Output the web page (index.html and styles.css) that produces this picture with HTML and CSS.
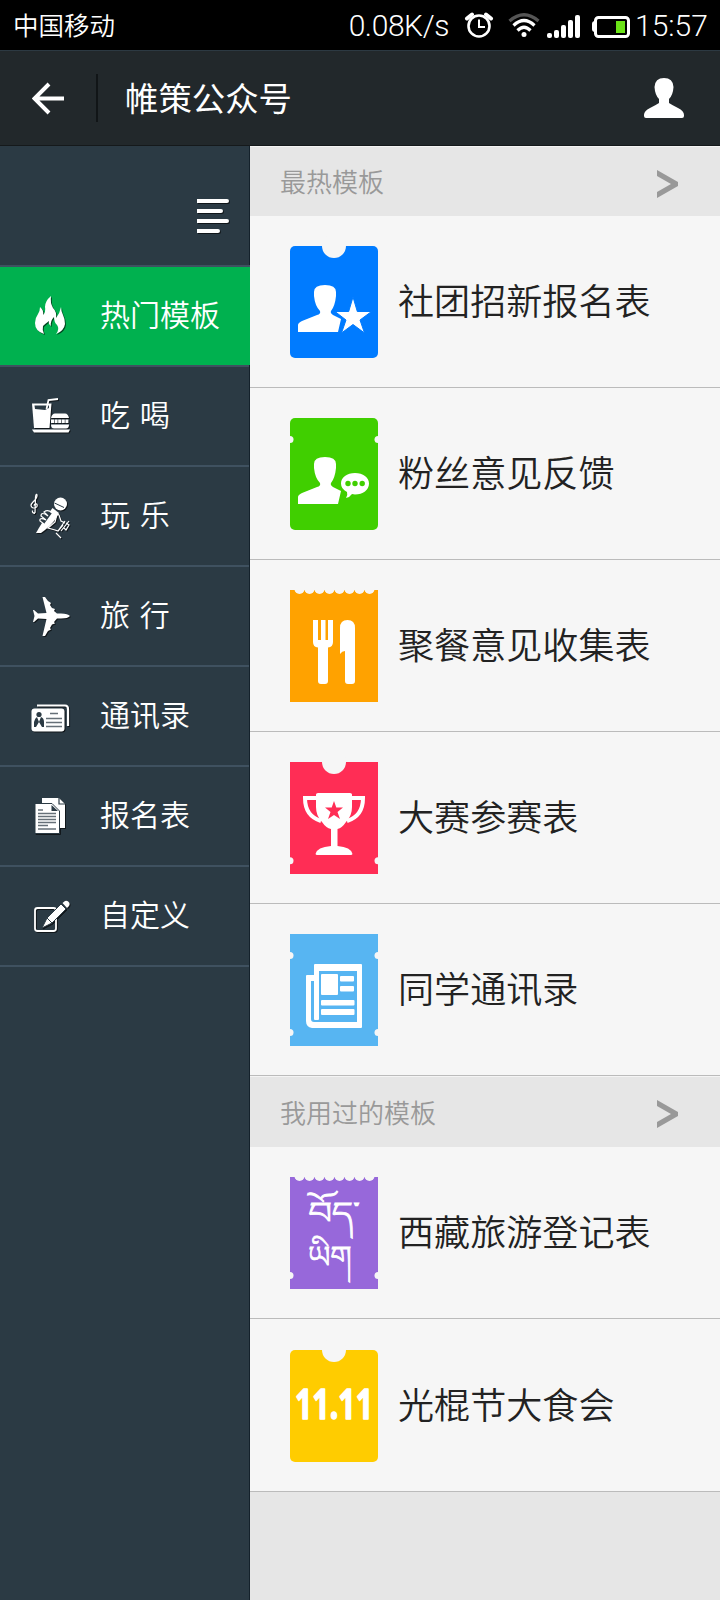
FILE: index.html
```html
<!DOCTYPE html>
<html lang="zh-CN">
<head>
  <meta charset="utf-8">
  <title>帷策公众号</title>
  <meta name="viewport" content="width=device-width, initial-scale=1.0">
  <link rel="stylesheet" href="styles.css">
</head>
<body>
  <!-- Shared shapes -->
  <svg class="defs" width="0" height="0">
    <symbol id="person" viewBox="0 0 88 112">
      <path fill="#fff" d="M8 86V79Q8 77 12 75L27 69Q31 68 30 65Q25 60 24 50V46Q24 39 35 39Q46 39 46 46V50Q45 60 41 65Q40 67 43 69L51 73L48 86Z"/>
    </symbol>
    <symbol id="scallop" viewBox="0 0 88 112">
      <g fill="#f6f6f6">
        <circle cx="9.500" cy="-1" r="5"/><circle cx="19.500" cy="-1" r="5"/><circle cx="29.500" cy="-1" r="5"/><circle cx="39.500" cy="-1" r="5"/>
        <circle cx="49.500" cy="-1" r="5"/><circle cx="59.500" cy="-1" r="5"/><circle cx="69.500" cy="-1" r="5"/><circle cx="79.500" cy="-1" r="5"/>
      </g>
    </symbol>
  </svg>

  <div class="status-bar">
    <span class="carrier">中国移动</span>
    <span class="speed">0.08K/s</span>
    <svg class="alarm" width="30" height="26" viewBox="0 0 30 26">
      <circle cx="15" cy="14" r="10.500" fill="none" stroke="#fff" stroke-width="2.600"/>
      <path d="M15 7.500V15H21" fill="none" stroke="#fff" stroke-width="2"/>
      <path d="M3 6.500L8 2.500M27 6.500L22 2.500" stroke="#fff" stroke-width="4" stroke-linecap="round"/>
    </svg>
    <svg class="wifi" width="32" height="26" viewBox="0 0 32 26">
      <g fill="none" stroke-width="3.200">
        <path d="M1.500 9Q16-3.500 30.500 9" stroke="#555"/>
        <path d="M5.500 13.500Q16 3.500 26.500 13.500" stroke="#fff"/>
        <path d="M9.500 18.500Q16 12 22.500 18.500" stroke="#fff"/>
      </g>
      <circle cx="16" cy="22.500" r="2.500" fill="#fff"/>
    </svg>
    <svg class="signal" width="34" height="24" viewBox="0 0 34 24">
      <g fill="#fff">
        <rect x="0" y="18" width="5" height="5" rx="2"/>
        <rect x="7" y="15" width="5" height="8" rx="2"/>
        <rect x="14" y="10" width="5" height="13" rx="2"/>
        <rect x="21" y="5" width="5" height="18" rx="2"/>
        <rect x="28" y="0" width="5" height="23" rx="2"/>
      </g>
    </svg>
    <svg class="battery" width="38" height="24" viewBox="0 0 38 24">
      <rect x="0" y="6" width="6" height="11" rx="3" fill="#fff"/>
      <rect x="3.500" y="2.500" width="33" height="19" rx="3" fill="#000" stroke="#fff" stroke-width="3"/>
      <rect x="24" y="6" width="9" height="12" fill="#6be317"/>
    </svg>
    <span class="clock">15:57</span>
  </div>

  <header class="header">
    <svg class="back" width="34" height="34" viewBox="0 0 34 34">
      <path d="M32 17.500H3M17 3L2.500 17.500L17 32" fill="none" stroke="#fff" stroke-width="4"/>
    </svg>
    <h1>帷策公众号</h1>
    <svg class="user" width="42" height="42" viewBox="0 0 42 42">
      <path fill="#fff" d="M21 1Q30 1 30.500 10Q30 18 26 22V26Q29 28 35 31Q41 34 41 38V39Q41 41 39 41H3Q1 41 1 39V38Q1 34 7 31Q13 28 16 26V22Q12 18 11.500 10Q12 1 21 1Z"/>
    </svg>
  </header>

  <div class="container">
    <nav class="sidebar">
      <div class="toggle">
        <svg width="34" height="38" viewBox="0 0 34 38">
          <path d="M0 3H30M0 13H24M0 23H30M0 33H21" stroke="#fff" stroke-width="4"/>
          <path d="M29.500 3H30M23.500 13H24M29.500 23H30M20.500 33H21" stroke="#fff" stroke-width="4" stroke-linecap="round"/>
        </svg>
      </div>
      <ul class="menu">
        <li class="active">
          <svg width="42" height="42" viewBox="0 0 42 42">
            <path fill="#fff" d="M14 39Q5 36 5 28Q5 23 8 19Q10 16 10 12Q14 15 13 20Q16 17 15 12Q15 6 21 1Q20 8 23 13Q27 17 26 23Q30 18 31 12Q31 16 33 20Q35 24 35 29Q34 36 26 39Q30 34 27 30Q24 27 24 22Q20 26 21 31Q18 29 19 26Q15 29 13 31Q12 35 14 39Z"/>
          </svg>
          <span>热门模板</span>
        </li>
        <li>
          <svg width="42" height="42" viewBox="0 0 42 42">
            <path fill="#fff" d="M2 8.500H21.500L19.500 33H4Z"/>
            <path fill="#2b3a44" d="M4.500 10.500H19V13L15 15L5 14Z"/>
            <path d="M16.500 14L18.500 5L28 4" fill="none" stroke="#fff" stroke-width="1.800"/>
            <path fill="#fff" d="M21 23Q22 18.500 25 18.500H35Q38 18.500 39 23ZM21 29.500H39Q39 33.500 36 33.500H24Q21 33.500 21 29.500Z"/>
            <path d="M21 26.300H39" stroke="#fff" stroke-width="3.500" stroke-dasharray="3 .6"/>
            <path fill="#fff" d="M2 34.500H40L38.500 37.500H4Z"/>
          </svg>
          <span>吃 喝</span>
        </li>
        <li>
          <svg width="42" height="46" viewBox="0 -2 42 46">
            <path d="M5 18.500Q2 18 2.500 15.500M5 18L5.500 2Q6-2 7 0Q7.500 3 3 7Q-1 11 3 13Q8 13 7 9.500Q5 7.500 4 10.500" fill="none" stroke="#fff" stroke-width="1.200"/>
            <circle cx="30.500" cy="9" r="6.500" fill="#fff"/>
            <path fill="#fff" d="M22.500 13L29 18Q24 28 15 35L11 38H6Q12 27 22.500 13Z"/>
            <path d="M24.500 8L34 12.500" stroke="#2b3a44" stroke-width="1"/>
            <path fill="#2b3a44" stroke="#fff" stroke-width="1.200" d="M22 18Q18 14 14 17L18 21Q11 16 11 21L16 25Q9 22 10 26L14 29"/>
            <path fill="none" stroke="#fff" stroke-width="1.200" d="M25 17L29 20L31 26L35 28M27 19L25 27L18 33L25 35L28 36L33 30M26 38L31 43M28 36L35 26M31 36L39 26M34 33L36 35L39 30L36 28"/>
          </svg>
          <span>玩 乐</span>
        </li>
        <li>
          <svg width="42" height="42" viewBox="0 0 42 42">
            <path fill="#fff" d="M40 21Q38 23.500 31 23.500H27L24 27L25 28.500L22 29.500L20 33L21 34.500L18 36L15 41H12.500L16.500 24L8 23.500L4 27H3L4.500 21L3 15H4L8 18.500L16.500 18L12.500 2H15L18 6L21 8L20 10L22 13L25 14L24 16L27 18.500H31Q38 18.500 40 21Z"/>
          </svg>
          <span>旅 行</span>
        </li>
        <li>
          <svg width="42" height="42" viewBox="0 0 42 42">
            <path d="M7 10.500H35Q38 10.500 38 14V31" fill="none" stroke="#fff" stroke-width="2.200"/>
            <rect x="1.500" y="13.500" width="33" height="23" rx="3" fill="#fff"/>
            <circle cx="9" cy="19.500" r="2.600" fill="#2b3a44"/>
            <path fill="#2b3a44" d="M4 32V27Q5 23 7 22L9 27L11 22Q14 23 14 27V32H12L9 27L6 32Z"/>
            <path d="M20 18.500H28M16 23.500H32M16 27.500H32M16 31.500H32" stroke="#667078" stroke-width="1.500"/>
          </svg>
          <span>通讯录</span>
        </li>
        <li>
          <svg width="42" height="42" viewBox="0 0 42 42">
            <path fill="#fff" d="M12 3H29L35 9V33H12Z"/>
            <path d="M29 3V9H35" fill="none" stroke="#2b3a44" stroke-width="1.200"/>
            <path fill="#fff" stroke="#2b3a44" stroke-width="1" d="M5 8.500H22L29.500 16V38.500H5Z"/>
            <path fill="#2b3a44" d="M21.500 10V16H28Z"/>
            <path d="M8 15H13M8 18.500H26M8 21.500H26M8 24.500H26M8 27.500H26M8 30.500H18M8 34H26" stroke="#667078" stroke-width="1.400"/>
          </svg>
          <span>报名表</span>
        </li>
        <li>
          <svg width="42" height="42" viewBox="0 0 42 42">
            <rect x="5" y="13" width="21" height="23" rx="2.500" fill="none" stroke="#fff" stroke-width="1.800"/>
            <path fill="#fff" stroke="#2b3a44" stroke-width="1" d="M12 33L17 23L31 9L36 14L22 28Z"/>
            <path fill="#fff" d="M32.500 8L35 6Q37.500 5 39.500 8Q40 10 38.500 11.500L37 13Z"/>
            <path d="M17 23L22 28" stroke="#2b3a44" stroke-width="1"/>
          </svg>
          <span>自定义</span>
        </li>
      </ul>
    </nav>

    <main class="content">
      <div class="section-title">
        <h2>最热模板</h2>
        <svg width="21" height="28" viewBox="0 0 21 28"><path fill="#999" d="M0 0L21 12V16L0 28V22L14 14L0 6Z"/></svg>
      </div>
      <ul class="list">
        <li>
          <svg class="ticket" width="88" height="112" viewBox="0 0 88 112">
            <rect width="88" height="112" rx="5" fill="#007bff"/>
            <circle cx="44" cy="0" r="12" fill="#f6f6f6"/>
            <use href="#person"/>
            <path fill="#fff" stroke="#007bff" stroke-width="1" d="M63 51L67.300 65.500H81.500L70 74L74.500 87L63 78.500L51.500 87L56 74L45 65.500H58.700Z"/>
          </svg>
          <span>社团招新报名表</span>
        </li>
        <li>
          <svg class="ticket" width="88" height="112" viewBox="0 0 88 112">
            <rect width="88" height="112" rx="5" fill="#40cf00"/>
            <g fill="#f6f6f6"><circle cx="0" cy="21.500" r="3.500"/><circle cx="88" cy="21.500" r="3.500"/></g>
            <use href="#person"/>
            <path fill="#fff" d="M65 55C73 55 79 59.500 79 65.500C79 72 73 76.500 65 76.500L62 76Q60 79 56 80Q58 77 57 74Q51 71 51 65.500C51 59.500 57 55 65 55Z"/>
            <g fill="#40cf00"><circle cx="58" cy="65.500" r="2.700"/><circle cx="65" cy="65.500" r="2.700"/><circle cx="72.200" cy="65.500" r="2.700"/></g>
          </svg>
          <span>粉丝意见反馈</span>
        </li>
        <li>
          <svg class="ticket" width="88" height="112" viewBox="0 0 88 112">
            <rect width="88" height="112" fill="#ffa200"/>
            <use href="#scallop"/>
            <path fill="#fff" d="M23 30H28V50H31V30H35.500V50H38V30H43V52Q43 57 38 57.500V91Q38 94 35 94H31Q28 94 28 91V57.500Q23 57 23 52Z"/>
            <path fill="#fff" d="M50 64V38Q50 30 57.500 30Q65 30 65 38V91Q65 94 62 94H58Q55 94 55 91V61Q52 61 50 64Z"/>
          </svg>
          <span>聚餐意见收集表</span>
        </li>
        <li>
          <svg class="ticket" width="88" height="112" viewBox="0 0 88 112">
            <rect width="88" height="112" fill="#ff2d55"/>
            <g fill="#f6f6f6"><circle cx="44" cy="0" r="12"/><circle cx="0" cy="98.700" r="3.500"/><circle cx="88" cy="98.700" r="3.500"/></g>
            <path d="M27 36H15Q15 54 31 59M61 36H73Q73 54 57 59" fill="none" stroke="#fff" stroke-width="4"/>
            <path fill="#fff" d="M26 32.500Q26 31 28 31H60Q62 31 62 32.500V45Q62 54 56 60Q52 66 47.500 67V84Q61 85 62.500 92Q62 93 61 93H27Q26 93 25.500 92Q27 85 41 84V67Q36 66 32 60Q26 54 26 45Z"/>
            <path fill="#ff2d55" d="M44 39L46.300 45.500H53L47.500 50L50 57L44 53L38 57L40.500 50L35 45.500H41.700Z"/>
          </svg>
          <span>大赛参赛表</span>
        </li>
        <li>
          <svg class="ticket" width="88" height="112" viewBox="0 0 88 112">
            <rect width="88" height="112" fill="#57b5f2"/>
            <g fill="#f6f6f6"><circle cx="0" cy="21.500" r="3.500"/><circle cx="88" cy="21.500" r="3.500"/><circle cx="0" cy="98.500" r="3.500"/><circle cx="88" cy="98.500" r="3.500"/></g>
            <path fill="#fff" fill-rule="evenodd" d="M25 30H71Q72 30 72 31V93Q72 94 71 94H22Q16 93 16 87V42Q16 41 17 41H24V31Q24 30 25 30ZM29 37V85Q29 86 28 86H25Q24 86 24 85V47H21V85Q21 88 24 88H67V37Z"/>
            <g fill="#fff">
              <rect x="31" y="40" width="17" height="21" rx="1"/>
              <rect x="50" y="42" width="14" height="5.500" rx="1"/>
              <rect x="50" y="52" width="14" height="5.500" rx="1"/>
              <rect x="31" y="66" width="33.500" height="5.500" rx="1"/>
              <rect x="31" y="75" width="33.500" height="6" rx="1"/>
            </g>
          </svg>
          <span>同学通讯录</span>
        </li>
      </ul>

      <div class="section-title used">
        <h2>我用过的模板</h2>
        <svg width="21" height="28" viewBox="0 0 21 28"><path fill="#999" d="M0 0L21 12V16L0 28V22L14 14L0 6Z"/></svg>
      </div>
      <ul class="list">
        <li>
          <svg class="ticket" width="88" height="112" viewBox="0 0 88 112">
            <rect width="88" height="112" fill="#9768da"/>
            <use href="#scallop"/>
            <g fill="#f6f6f6"><circle cx="0" cy="98.500" r="3.500"/><circle cx="88" cy="98.500" r="3.500"/></g>
            <text class="tibetan" x="18" y="47" textLength="52" lengthAdjust="spacingAndGlyphs">བོད་</text>
            <text class="tibetan" x="18" y="91">ཡིག</text>
          </svg>
          <span>西藏旅游登记表</span>
        </li>
        <li class="last">
          <svg class="ticket" width="88" height="112" viewBox="0 0 88 112">
            <rect width="88" height="112" rx="5" fill="#ffcc00"/>
            <circle cx="44" cy="0" r="12" fill="#f6f6f6"/>
            <text class="date" x="5" y="69" textLength="78" lengthAdjust="spacingAndGlyphs">11.11</text>
          </svg>
          <span>光棍节大食会</span>
        </li>
      </ul>
    </main>
  </div>
</body>
</html>
```

FILE: styles.css
```css
* {
  box-sizing: border-box;
}

body {
  display: flex;
  flex-direction: column;
  height: 1600px;
  margin: 0;
  background: #e6e6e6;
  color: #222;
  font-family: "Noto Sans CJK SC", sans-serif;
  font-weight: 350;
  overflow: hidden;
}

h1, h2, ul {
  margin: 0;
  padding: 0;
  font-weight: 350;
  list-style: none;
}

svg {
  display: block;
  flex: none;
}

.defs {
  display: none;
}

.status-bar {
  display: flex;
  align-items: center;
  height: 50px;
  padding: 0 13px;
  background: #000;
  color: #fff;
  line-height: 50px;
}

.carrier {
  margin-top: -3px;
  font-size: 25.5px;
}

.speed, .clock {
  font-family: Roboto, sans-serif;
  font-size: 30px;
  font-weight: 300;
  padding-top: 2px;
}

.speed {
  margin-left: auto;
  margin-right: 15px;
  letter-spacing: -0.4px;
}

.alarm {
  margin-right: 14px;
}

.wifi {
  margin-right: 7px;
}

.signal {
  margin-top: 3px;
  margin-right: 11px;
}

.battery {
  margin-top: 3px;
  margin-right: 5px;
}

.clock {
  width: 72px;
}

.header {
  display: flex;
  align-items: center;
  height: 96px;
  padding: 0 35px 0 32px;
  background: #22282b;
  border-top: 1px solid #2c3942;
  border-bottom: 1px solid #15191b;
  color: #fff;
}

.header h1 {
  flex: 1;
  height: 48px;
  margin-left: 30px;
  padding-left: 27px;
  border-left: 2px solid #111517;
  font-size: 33.4px;
  font-weight: 400;
  line-height: 46px;
}

.container {
  display: flex;
  flex: 1;
}

.sidebar {
  width: 250px;
  background: #2b3a44;
  border-right: 1px solid #14212b;
  color: #fff;
}

.toggle {
  display: flex;
  justify-content: flex-end;
  height: 119px;
  padding: 52px 18px 0 0;
}

.sidebar svg {
  filter: drop-shadow(1px 1px 0.5px rgba(0, 0, 0, 0.6));
}

.menu li {
  display: flex;
  align-items: center;
  height: 100px;
  padding-left: 30px;
  border-top: 2px solid #3f5160;
  font-size: 30px;
}

.menu li:last-child {
  height: 102px;
  border-bottom: 2px solid #3f5160;
}

.menu span {
  margin: -6px 0 0 28px;
  line-height: 40px;
  word-spacing: 3px;
}

.menu .active {
  margin-right: -1px;
  background: #00b14f;
  background-clip: padding-box;
}

.content {
  flex: 1;
}

.section-title {
  display: flex;
  align-items: center;
  justify-content: space-between;
  height: 70px;
  padding: 4px 42px 0 30px;
  border-top: 1px solid #f4f4f4;
  background: #e6e6e6;
}

.section-title h2 {
  margin-top: -6px;
  color: #999;
  font-size: 26px;
  line-height: 40px;
}

.section-title.used {
  height: 71px;
}

.section-title.used h2 {
  margin-top: -4px;
}

.list li {
  display: flex;
  align-items: center;
  height: 172px;
  padding-left: 40px;
  background: #f6f6f6;
  border-bottom: 1px solid #bbb;
  font-size: 36.1px;
}

.list .last {
  height: 173px;
  padding-top: 1px;
}

.list span {
  margin: -6px 0 0 20px;
  line-height: 50px;
}

.ticket {
  overflow: visible;
}

.tibetan {
  fill: #fff;
  stroke: #fff;
  stroke-width: 0.8px;
  font-family: "Noto Serif Tibetan", "Noto Sans Tibetan", "Noto Sans", sans-serif;
  font-size: 31px;
}

.date {
  fill: #fff;
  stroke: #fff;
  stroke-width: 1.5px;
  stroke-linejoin: round;
  font-family: "Noto Sans", sans-serif;
  font-size: 42px;
  font-weight: 700;
}
```
